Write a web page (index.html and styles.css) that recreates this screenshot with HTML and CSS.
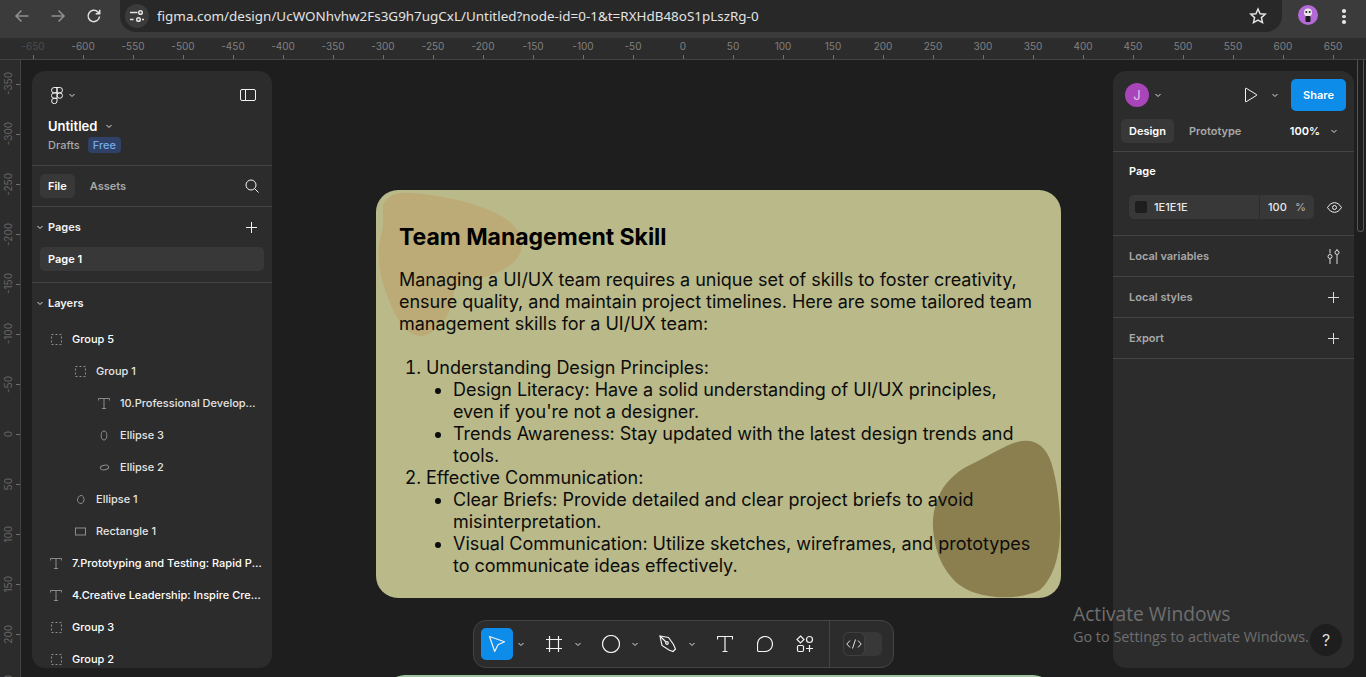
FILE: index.html
```html
<!DOCTYPE html>
<html lang="en">
<head>
<meta charset="utf-8">
<title>Untitled – Figma</title>
<link rel="stylesheet" href="styles.css">
</head>
<body>
<header class="browser">
  <div class="nav-btn"><svg width="16" height="16" viewBox="0 0 16 16" class="ico-dim"><path d="M14.5 8H2M7.5 2.5 2 8l5.5 5.5"/></svg></div>
  <div class="nav-btn"><svg width="16" height="16" viewBox="0 0 16 16" class="ico-dim"><path d="M1.5 8H14M8.500 2.500 14 8l-5.500 5.500"/></svg></div>
  <div class="nav-btn"><svg width="16" height="16" viewBox="0 0 16 16" class="ico-light"><path d="M13.500 8.500A5.700 5.700 0 1 1 11.800 3.900L13.700 5.800M13.700 1.800v4h-4"/></svg></div>
  <div class="omnibox">
    <div class="site-btn"><svg width="14" height="14" viewBox="0 0 14 14" class="ico-light"><path d="M0 3.500h7.500M0 10.500h3.500M12 10.500h2"/><circle cx="10.500" cy="3.500" r="1.800"/><circle cx="9" cy="10.500" r="1.800" transform="translate(-.5 0)"/></svg></div>
    <span class="url">figma.com/design/UcWONhvhw2Fs3G9h7ugCxL/Untitled?node-id=0-1&amp;t=RXHdB48oS1pLszRg-0</span>
    <svg class="star ico-light" width="18" height="18" viewBox="0 0 18 18"><path d="m9 2 2.100 4.700 5.100.5-3.800 3.400 1.100 5L9 13l-4.500 2.600 1.100-5-3.800-3.400 5.100-.5z"/></svg>
  </div>
  <div class="profile"><svg width="20" height="20" viewBox="0 0 20 20"><circle cx="10" cy="10" r="10" fill="#b36ad6"/><circle cx="10" cy="7.500" r="4" fill="#e8e8e8"/><circle cx="8.300" cy="7" r="1" fill="#222"/><circle cx="11.700" cy="7" r="1" fill="#222"/><rect x="7.500" y="11" width="5" height="6" rx="1" fill="#1c1c1c"/></svg></div>
  <div class="kebab"><i></i><i></i><i></i></div>
</header>

<div class="ruler-h">
  <span class="rh fade">-650</span><span class="rh">-600</span><span class="rh">-550</span><span class="rh">-500</span><span class="rh">-450</span><span class="rh">-400</span><span class="rh">-350</span><span class="rh">-300</span><span class="rh">-250</span><span class="rh">-200</span><span class="rh">-150</span><span class="rh">-100</span><span class="rh">-50</span><span class="rh">0</span><span class="rh">50</span><span class="rh">100</span><span class="rh">150</span><span class="rh">200</span><span class="rh">250</span><span class="rh">300</span><span class="rh">350</span><span class="rh">400</span><span class="rh">450</span><span class="rh">500</span><span class="rh">550</span><span class="rh">600</span><span class="rh">650</span>
</div>

<div class="workspace">
  <div class="ruler-v">
    <span class="rv"><b>-350</b></span><span class="rv"><b>-300</b></span><span class="rv"><b>-250</b></span><span class="rv"><b>-200</b></span><span class="rv"><b>-150</b></span><span class="rv"><b>-100</b></span><span class="rv"><b>-50</b></span><span class="rv"><b>0</b></span><span class="rv"><b>50</b></span><span class="rv"><b>100</b></span><span class="rv"><b>150</b></span><span class="rv"><b>200</b></span><span class="rv"><b>250</b></span>
  </div>

  <main class="canvas">
    <article class="card">
      <svg class="blobs" viewBox="0 0 685 408" width="685" height="408">
        <path fill="#bcab76" d="M7 15C12 5 22 2 35 3C60 5 80 9 96 14C115 20 130 27 138 36C144 43 147 50 146 56C145 64 141 70 133 76C122 84 100 90 81 95C77 104 76 112 73 122C69 132 60 141 50 145C42 148 34 144 27 136C19 126 13 112 8 97C4 84 2 72 3 60C3 50 6 45 7 36Z"/>
        <path fill="#8b7f4f" d="M594 275C615 265 632 253 646 251C660 249 670 257 675 272C681 290 685 320 684 345C683 368 677 388 664 400C650 407 632 408 620 407C600 405 585 399 576 388C566 377 560 362 558 347C555 330 558 313 567 298C574 288 583 280 594 275Z"/>
      </svg>
      <div class="card-body">
        <h1>Team Management Skill</h1>
        <p>Managing a UI/UX team requires a unique set of skills to foster creativity, ensure quality, and maintain project timelines. Here are some tailored team management skills for a UI/UX team:</p>
        <ol>
          <li>Understanding Design Principles:
            <ul>
              <li>Design Literacy: Have a solid understanding of UI/UX principles, even if you're not a designer.</li>
              <li>Trends Awareness: Stay updated with the latest design trends and tools.</li>
            </ul>
          </li>
          <li>Effective Communication:
            <ul>
              <li>Clear Briefs: Provide detailed and clear project briefs to avoid misinterpretation.</li>
              <li>Visual Communication: Utilize sketches, wireframes, and prototypes to communicate ideas effectively.</li>
            </ul>
          </li>
        </ol>
      </div>
    </article>
    <div class="card-next"></div>

    <aside class="panel panel-left">
      <section class="file-head">
        <div class="logo-row">
          <svg class="logo ico-white thin" width="12" height="17" viewBox="0 0 12 17"><path d="M6 .5H3.200a2.700 2.700 0 0 0 0 5.400H6zM6 .5h2.800a2.700 2.700 0 0 1 0 5.400H6zM6 5.900H3.200a2.700 2.700 0 0 0 0 5.400H6z"/><circle cx="8.800" cy="8.600" r="2.700"/><path d="M3.200 11.300H6V14a2.700 2.700 0 1 1-2.800-2.700z"/></svg>
          <svg class="chev" width="8" height="8" viewBox="0 0 8 8"><path d="m1.500 3 2.500 2.500L6.500 3"/></svg>
          <svg class="push ico-white thin" width="16" height="12" viewBox="0 0 16 12"><rect x=".5" y=".5" width="15" height="11" rx="1.500"/><path d="M5.500.5v11"/></svg>
        </div>
        <div class="title-row"><strong>Untitled</strong><svg class="chev" width="8" height="8" viewBox="0 0 8 8"><path d="m1.500 3 2.500 2.500L6.500 3"/></svg></div>
        <div class="meta-row"><span>Drafts</span><em>Free</em></div>
      </section>
      <section class="tabs-row">
        <span class="tab tab-on">File</span><span class="tab">Assets</span>
        <svg class="push ico-white thin" width="14" height="14" viewBox="0 0 14 14"><circle cx="6" cy="6" r="5"/><path d="m9.700 9.700 3.800 3.800"/></svg>
      </section>
      <section class="pages">
        <div class="sec-title"><svg class="chev" width="8" height="8" viewBox="0 0 8 8"><path d="m1.500 3 2.500 2.500L6.500 3"/></svg><span>Pages</span><svg class="push ico-white thin" width="11" height="11" viewBox="0 0 11 11"><path d="M5.500 0v11M0 5.500h11"/></svg></div>
        <div class="page-row">Page 1</div>
      </section>
      <section class="layers">
        <div class="sec-title"><svg class="chev" width="8" height="8" viewBox="0 0 8 8"><path d="m1.500 3 2.500 2.500L6.500 3"/></svg><span>Layers</span></div>
        <div class="layer d0"><svg width="11" height="11" viewBox="0 0 11 11" class="ico-grp"><rect x=".5" y=".5" width="10" height="10"/></svg><span class="top">Group 5</span></div>
        <div class="layer d1"><svg width="11" height="11" viewBox="0 0 11 11" class="ico-grp"><rect x=".5" y=".5" width="10" height="10"/></svg><span>Group 1</span></div>
        <div class="layer d2"><svg width="12" height="11" viewBox="0 0 12 11" class="ico-t"><path d="M.5 2.500V.5h11v2M6 .5v10M4 10.500h4"/></svg><span>10.Professional Development: Encourage continuous learning</span></div>
        <div class="layer d2"><svg width="11" height="11" viewBox="0 0 11 11" class="ico-t"><ellipse cx="5" cy="5.500" rx="2.800" ry="4.500"/></svg><span>Ellipse 3</span></div>
        <div class="layer d2"><svg width="11" height="11" viewBox="0 0 11 11" class="ico-t"><ellipse cx="5.500" cy="5.500" rx="4.200" ry="2.300" transform="rotate(-10 5.500 5.500)"/></svg><span>Ellipse 2</span></div>
        <div class="layer d1"><svg width="11" height="11" viewBox="0 0 11 11" class="ico-t"><path d="M6 1.500c2.300 0 3 2 3 4s-1.300 4-3 4-3.500-1.300-3.500-3.300 1.300-4.700 3.500-4.700z"/></svg><span>Ellipse 1</span></div>
        <div class="layer d1"><svg width="11" height="11" viewBox="0 0 11 11" class="ico-t"><rect x=".5" y="2" width="10" height="7"/></svg><span>Rectangle 1</span></div>
        <div class="layer d0"><svg width="12" height="11" viewBox="0 0 12 11" class="ico-t"><path d="M.5 2.500V.5h11v2M6 .5v10M4 10.500h4"/></svg><span class="top">7.Prototyping and Testing: Rapid Prototyping and user feedback</span></div>
        <div class="layer d0"><svg width="12" height="11" viewBox="0 0 12 11" class="ico-t"><path d="M.5 2.500V.5h11v2M6 .5v10M4 10.500h4"/></svg><span class="top">4.Creative Leadership: Inspire Creativity in the whole team</span></div>
        <div class="layer d0"><svg width="11" height="11" viewBox="0 0 11 11" class="ico-grp"><rect x=".5" y=".5" width="10" height="10"/></svg><span class="top">Group 3</span></div>
        <div class="layer d0"><svg width="11" height="11" viewBox="0 0 11 11" class="ico-grp"><rect x=".5" y=".5" width="10" height="10"/></svg><span class="top">Group 2</span></div>
      </section>
    </aside>

    <aside class="panel panel-right">
      <section class="share-row">
        <span class="avatar">J</span>
        <svg class="chev" width="8" height="8" viewBox="0 0 8 8"><path d="m1.500 3 2.500 2.500L6.500 3"/></svg>
        <svg class="play ico-white thin" width="14" height="16" viewBox="0 0 14 16"><path d="M1.500 1.500v13a.4.4 0 0 0 .6.3l10.600-6.500a.4.4 0 0 0 0-.6L2.100 1.200a.4.4 0 0 0-.6.3z"/></svg>
        <svg class="chev play-chev" width="8" height="8" viewBox="0 0 8 8"><path d="m1.500 3 2.500 2.500L6.500 3"/></svg>
        <span class="share">Share</span>
      </section>
      <section class="mode-row">
        <span class="tab tab-on">Design</span><span class="tab">Prototype</span>
        <span class="zoom-val">100%</span>
        <svg class="chev" width="8" height="8" viewBox="0 0 8 8"><path d="m1.500 3 2.500 2.500L6.500 3"/></svg>
      </section>
      <section class="page-props">
        <div class="prop-title">Page</div>
        <div class="fill-row">
          <div class="fill-input">
            <span class="fill-hex"><i class="swatch"></i>1E1E1E</span>
            <span class="fill-op">100<small>%</small></span>
          </div>
          <svg class="push ico-white thin" width="15" height="11" viewBox="0 0 15 11"><path d="M.5 5.500C2.500 2.200 5 .7 7.500.7s5 1.500 7 4.800c-2 3.300-4.500 4.800-7 4.800s-5-1.500-7-4.800z"/><circle cx="7.500" cy="5.500" r="2"/></svg>
        </div>
      </section>
      <section class="prop-line"><span>Local variables</span><svg class="push ico-t bright" width="13" height="15" viewBox="0 0 13 15"><path d="M3 0v4.500M3 9.500V15M10 0v1M10 6v9"/><circle cx="3" cy="7.500" r="2"/><circle cx="10" cy="3.500" r="2"/></svg></section>
      <section class="prop-line"><span>Local styles</span><svg class="push ico-t bright" width="11" height="11" viewBox="0 0 11 11"><path d="M5.500 0v11M0 5.500h11"/></svg></section>
      <section class="prop-line"><span>Export</span><svg class="push ico-t bright" width="11" height="11" viewBox="0 0 11 11"><path d="M5.500 0v11M0 5.500h11"/></svg></section>
    </aside>

    <nav class="toolbar">
      <div class="tool tool-on"><svg width="18" height="18" viewBox="0 0 18 18" class="ico-white"><path d="M1.500 1.500 16.500 6.700 10 9.800 6.700 16.500z" stroke-linejoin="round"/></svg></div>
      <svg class="chev" width="16" height="8" viewBox="0 0 16 8"><path d="m5.500 3 2.500 2.500L10.500 3"/></svg>
      <div class="tool gap9"><svg width="16" height="16" viewBox="0 0 16 16" class="ico-white"><path d="M3.500 0v16M12.500 0v16M0 3.500h16M0 12.500h16"/></svg></div>
      <svg class="chev" width="16" height="8" viewBox="0 0 16 8"><path d="m5.500 3 2.500 2.500L10.500 3"/></svg>
      <div class="tool gap9"><svg width="18" height="18" viewBox="0 0 18 18" class="ico-white"><circle cx="9" cy="9" r="8.500"/></svg></div>
      <svg class="chev" width="16" height="8" viewBox="0 0 16 8"><path d="m5.500 3 2.500 2.500L10.500 3"/></svg>
      <div class="tool gap9"><svg width="18" height="18" viewBox="0 0 18 18" class="ico-white"><path d="M1 1 9.500 2.500 14.500 9.500 16.500 14 14 16.500 10 15 3 10.500z"/><circle cx="8" cy="8" r="1.300"/><path d="M1 1 7 7"/></svg></div>
      <svg class="chev" width="16" height="8" viewBox="0 0 16 8"><path d="m5.500 3 2.500 2.500L10.500 3"/></svg>
      <div class="tool gap9"><svg width="16" height="16" viewBox="0 0 16 16" class="ico-white"><path d="M.5 3.500v-3h15v3M8 .5v15M5.500 15.500h5"/></svg></div>
      <div class="tool gap8"><svg width="16" height="16" viewBox="0 0 16 16" class="ico-white"><path d="M8 .5a7.500 7.500 0 0 1 0 15H2a1.500 1.500 0 0 1-1.500-1.500V8A7.500 7.500 0 0 1 8 .5z"/></svg></div>
      <div class="tool gap8"><svg width="18" height="18" viewBox="0 0 18 18" class="ico-white"><path d="M4.500 1 8 4.500 4.500 8 1 4.500z"/><circle cx="13.500" cy="4.500" r="3"/><rect x="1.500" y="10.500" width="6" height="6" rx="1.200"/><path d="M13.500 10v7M10 13.500h7"/></svg></div>
      <div class="dev-wrap">
        <div class="dev-toggle"><span class="dev-knob"><svg width="16" height="10" viewBox="0 0 16 10" class="ico-light"><path d="M4 1.500.8 5 4 8.500M12 1.500 15.200 5 12 8.500M9.500.5 6.500 9.500"/></svg></span></div>
      </div>
    </nav>

    <div class="watermark"><div class="wm-a">Activate Windows</div><div class="wm-b">Go to Settings to activate Windows.</div></div>
    <div class="help">?</div>
    <div class="scroll-thumb"></div>
  </main>
</div>
</body>
</html>
```
FILE: styles.css
```css
* { box-sizing: border-box; }
html, body { margin: 0; height: 677px; overflow: hidden; background: #1e1e1e; }
body { font-family: Inter, "Liberation Sans", sans-serif; display: flex; flex-direction: column; color: #fff; }
svg { display: block; flex: none; fill: none; }

.ico-dim path { stroke: #8e8e8e; stroke-width: 1.6; }
.ico-light path, .ico-light circle { stroke: #e3e3e3; stroke-width: 1.5; }
.ico-white path, .ico-white circle, .ico-white rect { stroke: #f2f2f2; stroke-width: 1.2; }
.thin path, .thin circle, .thin rect, .thin ellipse { stroke-width: 1; }
.ico-grp rect { stroke: #8c8c8c; stroke-width: 1; stroke-dasharray: 2 2; }
.ico-t path, .ico-t ellipse, .ico-t rect, .ico-t circle { stroke: #8c8c8c; stroke-width: 1; }
.bright path, .bright circle { stroke: #dcdcdc; }
.chev path { stroke: #e0e0e0; stroke-width: 1; }
.push { margin-left: auto; }

/* browser chrome */
.browser { height: 39px; flex: none; display: flex; align-items: flex-start; background: #3b3b3b; border-bottom: 1px solid #2e2e2e; }
.nav-btn { width: 36px; height: 32px; display: flex; align-items: center; justify-content: center; flex: none; }
.nav-btn:first-child { margin-left: 4px; }
.omnibox { margin-left: 8px; width: 1162px; height: 32px; background: #282828; border-radius: 0 0 16px 16px; display: flex; align-items: center; padding: 0 15px 0 5px; }
.site-btn { width: 24px; height: 24px; border-radius: 50%; background: #3b3b3b; display: flex; align-items: center; justify-content: center; }
.url { margin-left: 8px; font: 13.43px "Noto Sans", sans-serif; color: #e3e3e3; white-space: nowrap; }
.star { margin-left: auto; }
.profile { margin: 5px 0 0 16px; width: 20px; }
.kebab { margin: 9px 0 0 24px; width: 4px; display: flex; flex-direction: column; gap: 2px; }
.kebab i { display: block; width: 3.500px; height: 3.500px; border-radius: 50%; background: #e3e3e3; }

/* rulers */
.ruler-h { height: 21px; flex: none; display: flex; padding-left: 8px; background: #2c2c2c; border-bottom: 1px solid #444; overflow: hidden; }
.rh { width: 50px; flex: none; position: relative; font-size: 10px; line-height: 12px; padding-top: 1px; text-align: center; color: #808080; }
.rh::after { content: ""; position: absolute; left: 25px; bottom: 0; width: 1px; height: 4px; background: #707070; }
.rh.fade { color: #4d4d4d; }
.workspace { flex: 1; display: flex; min-height: 0; }
.ruler-v { width: 21px; flex: none; display: flex; flex-direction: column; background: #2c2c2c; border-right: 1px solid #444; overflow: hidden; }
.rv { height: 50px; flex: none; display: flex; align-items: center; position: relative; padding-left: 2px; }
.rv:first-child { margin-top: -1px; }
.rv b { writing-mode: vertical-rl; transform: rotate(180deg); font-size: 10px; font-weight: 400; line-height: 12px; color: #666; }
.rv::after { content: ""; position: absolute; right: 0; top: 25px; width: 4px; height: 1px; background: #707070; }

/* canvas: a free surface, items are placed on it */
.canvas { flex: 1; position: relative; overflow: hidden; background: #1e1e1e; }
.card { position: absolute; left: 355px; top: 130px; width: 685px; height: 408px; border-radius: 22px; background: #b9b98a; overflow: hidden; color: #0c0c0c; }
.blobs { position: absolute; left: 0; top: 0; }
.card-body { position: relative; padding: 32px 0 0 23px; width: 662px; font-size: 18px; line-height: 22px; letter-spacing: -0.02px; }
.card-body h1 { margin: 0 0 17px; font-size: 23px; line-height: 30px; font-weight: 700; color: #000; }
.card-body p { margin: 0 0 22px; }
.card-body ol, .card-body ul { margin: 0; padding-left: 27px; }
.card-body ul { list-style: disc; }
.card-next { position: absolute; left: 364px; top: 615px; width: 668px; height: 40px; border-radius: 22px; background: #9fc39f; }

/* floating panels */
.panel { position: absolute; top: 11px; height: 597px; background: #2c2c2c; border-radius: 13px; overflow: hidden; font-size: 11px; line-height: 16px; font-weight: 500; }
.panel section { display: flex; }
.panel-left { left: 11px; width: 240px; }
.panel-right { left: 1092px; width: 241px; }

.file-head { flex-direction: column; height: 95px; padding: 16px 16px 0; border-bottom: 1px solid #444; }
.logo-row { display: flex; align-items: center; height: 16px; gap: 5px; }
.logo { margin-left: 3px; }
.title-row { display: flex; align-items: center; gap: 8px; margin-top: 14px; height: 18px; }
.title-row strong { font-size: 13px; font-weight: 600; }
.meta-row { display: flex; align-items: center; gap: 8px; margin-top: 2px; height: 16px; color: #a8a8a8; }
.meta-row em { font-style: normal; background: #2f4166; color: #72aceb; border-radius: 4px; padding: 0 5px; }
.tabs-row { height: 41px; align-items: center; padding: 0 13px 0 8px; gap: 7px; border-bottom: 1px solid #444; }
.tab { height: 24px; line-height: 24px; padding: 0 8px; border-radius: 5px; color: #a8a8a8; font-weight: 600; }
.tab-on { background: #383838; color: #fff; }
.pages { flex-direction: column; height: 76px; padding-top: 12px; border-bottom: 1px solid #444; }
.sec-title { display: flex; align-items: center; height: 16px; padding: 0 15px 0 4px; gap: 4px; font-weight: 600; color: #f2f2f2; }
.page-row { margin: 12px 8px 0; height: 24px; line-height: 24px; padding-left: 8px; border-radius: 5px; background: #383838; font-weight: 600; }
.layers { flex-direction: column; padding-top: 12px; }
.layers .sec-title { margin-bottom: 12px; }
.layer { display: flex; align-items: center; height: 32px; gap: 10px; padding-right: 10px; color: #e4e4e4; font-weight: 500; }
.layer span { overflow: hidden; white-space: nowrap; text-overflow: ellipsis; min-width: 0; }
.layer span.top { color: #fff; font-weight: 500; }
.layer svg[width="11"] { margin-left: 1px; }
.d0 { padding-left: 18px; }
.d1 { padding-left: 42px; }
.d2 { padding-left: 66px; }

.share-row { height: 48px; align-items: center; padding: 0 8px 0 12px; }
.avatar { width: 24px; height: 24px; border-radius: 50%; background: #a845b8; color: #e8c4ef; text-align: center; line-height: 24px; font-size: 13px; font-weight: 400; margin-right: 5px; }
.play { margin-left: 82px; }
.play-chev { margin-left: 13px; }
.share { margin-left: 12px; width: 55px; height: 32px; line-height: 32px; text-align: center; background: #0d8ce9; border-radius: 5px; font-weight: 600; }
.mode-row { align-items: flex-start; padding: 0 16px 0 8px; border-bottom: 1px solid #444; height: 33px; }
.mode-row .tab + .tab { margin-left: 7px; }
.zoom-val { margin-left: auto; line-height: 24px; font-weight: 600; margin-right: 10px; }
.mode-row .chev { margin-top: 8px; }
.page-props { flex-direction: column; height: 84px; padding: 11px 0 0 16px; border-bottom: 1px solid #444; }
.prop-title { font-weight: 600; }
.fill-row { display: flex; align-items: center; margin-top: 16px; padding-right: 12px; }
.fill-input { display: flex; width: 185px; height: 24px; background: #383838; border-radius: 5px; line-height: 24px; gap: 1px; overflow: hidden; }
.fill-hex { width: 130px; display: flex; align-items: center; gap: 7px; padding-left: 6px; color: #e8e8e8; }
.swatch { width: 12px; height: 12px; background: #1e1e1e; border-radius: 2px; }
.fill-op { flex: 1; display: flex; justify-content: space-between; padding: 0 8px; box-shadow: -1px 0 0 #2c2c2c; color: #e8e8e8; }
.fill-op small { font-size: 11px; color: #aaa; }
.prop-line { height: 41px; align-items: center; padding: 0 15px 0 16px; border-bottom: 1px solid #444; color: #a8a8a8; font-weight: 600; }
.prop-line svg[width="11"] { margin-right: 0; }
.prop-line svg[width="13"] { margin-right: -1px; }

/* toolbar */
.toolbar { position: absolute; left: 452px; top: 560px; width: 421px; height: 48px; display: flex; align-items: center; padding-left: 7px; background: #2c2c2c; border: 1px solid #444; border-radius: 13px; }
.tool { width: 32px; height: 32px; flex: none; display: flex; align-items: center; justify-content: center; border-radius: 5px; }
.tool-on { background: #0d8ce9; }
.gap9 { margin-left: 9px; }
.gap8 { margin-left: 8px; }
.dev-wrap { margin-left: 8px; height: 46px; padding-left: 13px; border-left: 1px solid #444; display: flex; align-items: center; }
.dev-toggle { width: 39px; height: 24px; border-radius: 6px; background: #383838; }
.dev-knob { width: 22px; height: 24px; display: flex; align-items: center; justify-content: center; border-radius: 6px; background: #2c2c2c; border: 1px solid #3f3f3f; }
.dev-knob path { stroke-width: 1; }

.watermark { position: absolute; left: 1052px; top: 542px; font-family: "Open Sans", sans-serif; color: #6f6f6f; pointer-events: none; }
.wm-a { font-size: 19.200px; line-height: 24px; }
.wm-b { font-size: 14.400px; line-height: 22px; white-space: nowrap; }
.help { position: absolute; left: 1289px; top: 564px; width: 32px; height: 32px; border-radius: 50%; background: #1e1e1e; color: #ddd; font-size: 16px; font-weight: 400; line-height: 32px; text-align: center; }
.scroll-thumb { position: absolute; left: 1336px; top: 0; width: 7px; height: 172px; border: 1px solid #555; border-top: 0; border-radius: 0 0 4px 4px; }
```
